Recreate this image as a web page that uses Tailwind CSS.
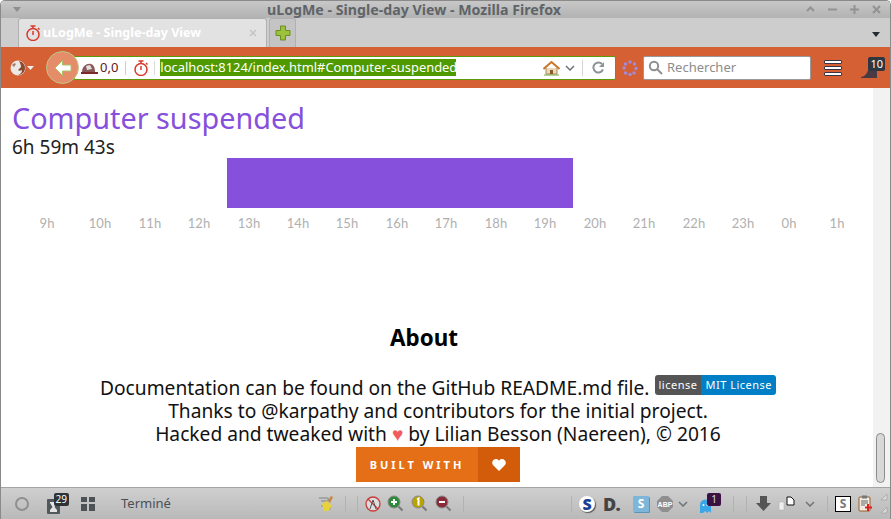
<!DOCTYPE html>
<html lang="fr">
<head>
    <meta charset="UTF-8" />
    <title>uLogMe - Single-day View - Mozilla Firefox</title>
    <script src="https://cdn.jsdelivr.net/npm/@tailwindcss/browser@4"></script>
</head>
<body class="m-0 overflow-hidden bg-white font-['Noto_Sans','Open_Sans',sans-serif]">
<div class="flex h-[519px] w-[891px] flex-col overflow-hidden rounded-t-[5px] border-x border-t border-x-[#8a8a8a] border-t-[#8a8a8a]">

    <!-- title bar -->
    <div class="flex h-[17px] shrink-0 items-center justify-between bg-gradient-to-b from-[#c8c8c8] to-[#b2b2b2] pl-[11px] pr-[9px]">
        <svg width="10" height="6" viewBox="0 0 10 6"><path d="M1 0h8L5 5z" fill="#8e8e8e"/></svg>
        <div class="text-[14.2px] font-bold leading-[17px] text-[#5f6468]">uLogMe - Single-day View - Mozilla Firefox</div>
        <div class="flex items-center gap-[13px]">
            <svg width="9" height="9" viewBox="0 0 9 9"><path d="M1 6l3.500-3.500L8 6" fill="none" stroke="#929292" stroke-width="2"/></svg>
            <svg width="9" height="9" viewBox="0 0 9 9"><path d="M0 4.500h9" stroke="#929292" stroke-width="2"/></svg>
            <svg width="9" height="9" viewBox="0 0 9 9"><path d="M0 4.500h9M4.500 0v9" stroke="#929292" stroke-width="2"/></svg>
            <svg width="9" height="9" viewBox="0 0 9 9"><path d="M1 1l7 7M8 1l-7 7" stroke="#929292" stroke-width="2"/></svg>
        </div>
    </div>

    <!-- tab strip -->
    <div class="flex h-[29px] shrink-0 items-end bg-[#cdcdcd] pl-[17px] pr-[10px]">
        <div class="flex h-[29px] w-[249px] items-center rounded-t-[3px] border border-b-0 border-[#b0b0b0] bg-[#e2e2e2] pl-[6px] pr-[9px]">
            <svg width="16" height="16" viewBox="0 0 16 16" class="shrink-0"><circle cx="8" cy="9.500" r="6" fill="none" stroke="#d8392b" stroke-width="1.500"/><path d="M5.500 1h5M8 1v2M8 6v4M13 3l1.500 1.500" stroke="#d8392b" stroke-width="1.500" fill="none"/></svg>
            <span class="ml-[2px] text-[12.500px] font-bold leading-none text-white">uLogMe - Single-day View</span>
            <svg width="8" height="8" viewBox="0 0 8 8" class="ml-auto"><path d="M1 1l6 6M7 1L1 7" stroke="#c4c4c4" stroke-width="1.500"/></svg>
        </div>
        <div class="ml-[2px] flex h-[29px] w-[27px] items-center justify-center rounded-t-[3px] border border-b-0 border-[#b0b0b0] bg-[#c4c4c4]">
            <svg width="16" height="16" viewBox="0 0 16 16"><path d="M5.500 1h5v4.500H15v5h-4.500V15h-5v-4.500H1v-5h4.500z" fill="#9cc23c" stroke="#6d8f22"/></svg>
        </div>
        <svg width="8" height="5" viewBox="0 0 8 5" class="mb-[10px] ml-auto"><path d="M0 0h8L4 5z" fill="#222b36"/></svg>
    </div>

    <!-- nav bar -->
    <div class="flex h-[41px] shrink-0 items-center bg-[#d46034] pl-[9px]">
        <svg width="24" height="18" viewBox="0 0 24 18" class="shrink-0"><circle cx="8" cy="9" r="7.500" fill="#ece8e4"/><path d="M9 2c4 1 6 4 6 7 0 4-3 7-7 7 3-1 4-3 4-5-1 1-3 1-4 0l3-3C11 6 10 4 9 2z" fill="#8a4a34"/><path d="M2 6c2-2 3-2 4-1L4 8z" fill="#a87a68"/><path d="M17 7h7l-3.500 4z" fill="#eee"/></svg>
        <!-- back button overlaps the url bar -->
        <div class="relative z-10 ml-[12px] flex h-[33px] w-[33px] shrink-0 items-center justify-center rounded-full border border-[#b9c98e] bg-[#e58c68]">
            <svg width="18" height="16" viewBox="0 0 18 16"><path d="M8.500 0.500L1 8l7.500 7.500v-4.500H17V5H8.500z" fill="#fff" stroke="#a8c46a"/></svg>
        </div>
        <div class="-ml-[5px] flex h-[24px] w-[542px] shrink-0 items-center rounded-r-[2px] border border-[#5b9a08] bg-white">
            <svg width="20" height="16" viewBox="0 0 20 16" class="ml-[5px] shrink-0"><path d="M2 12C2 6 7 3 11 4c3 1 4 4 4 8z" fill="#8a5a5a"/><path d="M1 13h17" stroke="#7c2a2a" stroke-width="2"/><path d="M6 6l4-1 2 4-5 1z" fill="#e6e0e0"/></svg>
            <span class="text-[13px] leading-none text-[#5c1a1a]">0,0</span>
            <div class="ml-[7px] mr-[7px] h-[14px] w-px bg-[#d8c8c0]"></div>
            <svg width="16" height="16" viewBox="0 0 16 16" class="shrink-0"><circle cx="8" cy="9.500" r="6" fill="none" stroke="#d8392b" stroke-width="1.500"/><path d="M5.500 1h5M8 1v2M8 6v4M13 3l1.500 1.500" stroke="#d8392b" stroke-width="1.500" fill="none"/></svg>
            <div class="mx-[5px] h-[14px] w-px bg-[#dcdcdc]"></div>
            <span class="flex h-[17px] w-[296px] items-center whitespace-nowrap bg-[#4f9a00] text-[12.900px] leading-none text-white">localhost:8124/index.html#Computer-suspended</span>
            <svg width="17" height="16" viewBox="0 0 17 16" class="ml-auto shrink-0"><path d="M3 8v6h11V8" fill="#e9d9b8" stroke="#a98a5a"/><path d="M0.500 9L8.500 2l8 7" fill="none" stroke="#c9772c" stroke-width="2"/><path d="M7 10h3v4H7z" fill="#8a5a2a"/><path d="M1 15h15" stroke="#6fa03a"/></svg>
            <svg width="10" height="6" viewBox="0 0 10 6" class="ml-[5px] shrink-0"><path d="M1 1l4 4 4-4" fill="none" stroke="#6e7478" stroke-width="1.500"/></svg>
            <div class="ml-[7px] h-[16px] w-px bg-[#d4d4d4]"></div>
            <svg width="13" height="13" viewBox="0 0 13 13" class="ml-[9px] mr-[10px] shrink-0"><path d="M11 8.500A5 5 0 1 1 10 3" fill="none" stroke="#8c9296" stroke-width="2"/><path d="M12 1v5H7z" fill="#8c9296"/></svg>
        </div>
        <svg width="16" height="16" viewBox="0 0 16 16" class="ml-[6px] shrink-0"><g fill="#a48ad8"><circle cx="8" cy="2" r="1.700"/><circle cx="12.500" cy="4" r="1.700"/><circle cx="14" cy="8.500" r="1.700"/><circle cx="12" cy="13" r="1.700"/><circle cx="8" cy="14.500" r="1.700"/><circle cx="3.500" cy="13" r="1.700"/><circle cx="2" cy="8" r="1.700"/><circle cx="3.500" cy="4" r="1.700"/></g></svg>
        <div class="ml-[5px] flex h-[24px] w-[168px] shrink-0 items-center rounded-[2px] border border-[#999] bg-white pl-[4px]">
            <svg width="15" height="15" viewBox="0 0 15 15" class="shrink-0"><circle cx="6" cy="6" r="4.200" fill="none" stroke="#8f8f8f" stroke-width="2"/><path d="M9 9l5 5" stroke="#8f8f8f" stroke-width="2"/></svg>
            <span class="ml-[4px] text-[13px] leading-none text-[#8d8d8d]">Rechercher</span>
        </div>
        <div class="ml-[13px] flex h-[16px] w-[18px] shrink-0 flex-col justify-between">
            <div class="h-[4px] rounded-[1px] border border-[#3b3344] bg-white"></div>
            <div class="h-[4px] rounded-[1px] border border-[#3b3344] bg-white"></div>
            <div class="h-[4px] rounded-[1px] border border-[#3b3344] bg-white"></div>
        </div>
        <div class="relative ml-[19px] h-[20px] w-[24px] shrink-0">
            <svg width="16" height="10" viewBox="0 0 16 10" class="absolute bottom-0 left-0"><path d="M0 9c3 0 6-3 7-7h9v8H0z" fill="#4a3a44"/></svg>
            <span class="absolute -top-[1px] right-0 h-[14px] rounded-[2px] bg-[#2f3640] px-[2px] text-[11px] leading-[14px] text-white">10</span>
        </div>
    </div>

    <!-- page -->
    <div class="relative flex min-h-0 flex-1 bg-white">
        <div class="min-w-0 flex-1 pl-[11px]">
            <div class="mt-[12px] text-[28.800px] leading-[36px] text-[#8650dc]">Computer suspended</div>
            <div class="mt-[1px] text-[19px] leading-[21px] text-[#222]">6h 59m 43s</div>

            <!-- timeline -->
            <svg width="845" height="74" viewBox="0 0 845 74" class="-ml-[11px] block" font-family="Lato, sans-serif" font-size="13" fill="#b0b0b0" text-anchor="middle">
                <rect x="226" y="0" width="346" height="50" fill="#8650dc"/>
                <text x="46" y="70">9h</text>
                <text x="99" y="70">10h</text>
                <text x="149" y="70">11h</text>
                <text x="198" y="70">12h</text>
                <text x="248" y="70">13h</text>
                <text x="297" y="70">14h</text>
                <text x="346" y="70">15h</text>
                <text x="396" y="70">16h</text>
                <text x="445" y="70">17h</text>
                <text x="495" y="70">18h</text>
                <text x="544" y="70">19h</text>
                <text x="594" y="70">20h</text>
                <text x="643" y="70">21h</text>
                <text x="693" y="70">22h</text>
                <text x="742" y="70">23h</text>
                <text x="788" y="70">0h</text>
                <text x="836" y="70">1h</text>
            </svg>

            <div class="ml-[-11px] mt-[92px] flex flex-col items-center pl-[2px] text-[19.200px] leading-[23px] text-[#111]">
                <div class="pr-[28px] text-[22.400px] font-bold leading-[28px] text-black">About</div>
                <div class="mt-[24px] flex items-start">
                    <span>Documentation can be found on the GitHub README.md file.</span>
                    <span class="-mt-[1px] ml-[5px] flex h-[20px] overflow-hidden rounded-[3px] text-[11px] leading-[20px] tracking-[0.500px] text-white">
                        <span class="bg-[#555] px-[4px]">license</span>
                        <span class="bg-[#007ec6] px-[4px]">MIT License</span>
                    </span>
                </div>
                <div>Thanks to @karpathy and contributors for the initial project.</div>
                <div>Hacked and tweaked with <span class="text-[#f25c5c]">♥</span> by Lilian Besson (Naereen), © 2016</div>
                <div class="mt-[2px] flex h-[35px] items-stretch text-white">
                    <span class="flex w-[122px] items-center justify-center bg-[#e46f17] text-[11px] font-bold tracking-[3px]">BUILT WITH</span>
                    <span class="flex w-[42px] items-center justify-center bg-[#d25c0a]">
                        <svg width="14" height="12" viewBox="0 0 14 12"><path d="M7 12L1 6C-1 3.500 1 0 4 0c1.300 0 2.300.6 3 1.700C7.700.6 8.700 0 10 0c3 0 5 3.500 3 6z" fill="#fff"/></svg>
                    </span>
                </div>
            </div>
        </div>
        <!-- scrollbar -->
        <div class="relative w-[17px] shrink-0 bg-[#f2f2f2]">
            <div class="absolute bottom-[4px] left-[3px] h-[50px] w-[9px] rounded-[5px] border border-[#8c8c8c] bg-[#d8d8d8]"></div>
        </div>
    </div>

    <!-- status bar -->
    <div class="flex h-[32px] shrink-0 items-center border-t border-[#a4a4a4] bg-gradient-to-b from-[#cfcfcf] to-[#b9b9b9] pl-[14px] text-[#555]">
        <div class="h-[14px] w-[14px] shrink-0 rounded-full border-2 border-[#8f8f8f]"></div>
        <div class="relative ml-[18px] h-[20px] w-[22px] shrink-0">
            <svg width="13" height="15" viewBox="0 0 13 15" class="absolute bottom-0 left-0"><rect width="13" height="15" rx="1" fill="#50585c"/><path d="M3 3h7v1L7.500 8 10 11v2H3v-2l2.500-3L3 4z" fill="#e4e4e4"/></svg>
            <span class="absolute -top-[1px] right-0 h-[13px] rounded-[2px] bg-[#2f3338] px-[2px] text-[10px] leading-[13px] text-white">29</span>
        </div>
        <svg width="14" height="14" viewBox="0 0 14 14" class="ml-[12px] shrink-0"><path d="M0 0h6v5H0zM8 0h6v5H8zM0 7h6v7H0zM8 7h6v7H8z" fill="#4d5256"/></svg>
        <span class="ml-[26px] w-[197px] shrink-0 text-[13px] text-[#4a5056]">Terminé</span>
        <svg width="16" height="18" viewBox="0 0 16 18" class="shrink-0"><path d="M1 3h8a1.500 1.500 0 0 1 0 3H3" fill="none" stroke="#999" stroke-width="1.500"/><path d="M3 11h8a1.500 1.500 0 0 1 0 3" fill="none" stroke="#999" stroke-width="1.500"/><path d="M4 9l5-3 5 5-4 5H6z" fill="#e8d23a"/><path d="M10 6l3-5 2 1-3 6z" fill="#c8843a"/></svg>
        <div class="ml-[11px] h-[16px] w-px shrink-0 bg-[#b2b2b2]"></div>
        <div class="ml-[11px] h-[16px] w-px shrink-0 bg-[#b2b2b2]"></div>
        <svg width="16" height="16" viewBox="0 0 16 16" class="ml-[7px] shrink-0"><circle cx="8" cy="8" r="7" fill="#ddd" stroke="#c83c3c" stroke-width="1.300"/><path d="M3 3l10 10" stroke="#c83c3c" stroke-width="1.300"/><path d="M8 4l-3 9M8 4l3 9" stroke="#555"/></svg>
        <svg width="17" height="17" viewBox="0 0 17 17" class="ml-[6px] shrink-0"><circle cx="7" cy="7" r="6" fill="#2d8a3a" stroke="#888"/><path d="M7 4v6M4 7h6" stroke="#fff" stroke-width="2"/><path d="M11.500 11.500l4 4" stroke="#777" stroke-width="2"/></svg>
        <svg width="17" height="17" viewBox="0 0 17 17" class="ml-[7px] shrink-0"><circle cx="7" cy="7" r="6" fill="#b8a300" stroke="#888"/><path d="M6 4.500L7.500 3.500V10.500" fill="none" stroke="#fff" stroke-width="2"/><path d="M11.500 11.500l4 4" stroke="#777" stroke-width="2"/></svg>
        <svg width="17" height="17" viewBox="0 0 17 17" class="ml-[7px] shrink-0"><circle cx="7" cy="7" r="6" fill="#8a2b3a" stroke="#888"/><path d="M4 7h6" stroke="#fff" stroke-width="2"/><path d="M11.500 11.500l4 4" stroke="#777" stroke-width="2"/></svg>
        <div class="ml-[11px] h-[16px] w-px shrink-0 bg-[#b2b2b2]"></div>
        <div class="ml-[107px] h-[16px] w-px shrink-0 bg-[#b2b2b2]"></div>
        <span class="ml-[7px] flex h-[16px] w-[16px] shrink-0 items-center justify-center rounded-full bg-white text-[16px] font-black leading-none text-[#1c3f94] shadow-[1px_1px_1px_#555]">S</span>
        <span class="ml-[8px] w-[19px] shrink-0 text-[18px] font-black leading-none text-[#444]">D.</span>
        <span class="ml-[11px] flex h-[16px] w-[16px] shrink-0 items-center justify-center rounded-[1px] bg-[#7db6d8] text-[12px] font-bold leading-none text-white shadow-[1px_1px_0_#5c93b4]">S</span>
        <svg width="16" height="16" viewBox="0 0 16 16" class="ml-[8px] shrink-0" font-family="Liberation Sans, sans-serif"><path d="M5 0h6l5 5v6l-5 5H5l-5-5V5z" fill="#8f8f8f"/><text x="8" y="10.500" font-size="7" font-weight="700" fill="#fff" text-anchor="middle">ABP</text></svg>
        <svg width="10" height="6" viewBox="0 0 10 6" class="ml-[5px] shrink-0"><path d="M1 1l4 4 4-4" fill="none" stroke="#6e7478" stroke-width="1.500"/></svg>
        <div class="relative ml-[11px] h-[20px] w-[22px] shrink-0">
            <svg width="13" height="15" viewBox="0 0 13 15" class="absolute bottom-0 left-0"><path d="M1 14V6a5.500 5.500 0 0 1 11 0v8l-2-2-2 2-2-2-2 2z" fill="#39a6e8"/><circle cx="4.500" cy="6" r="1" fill="#fff"/><circle cx="8.500" cy="6" r="1" fill="#fff"/></svg>
            <span class="absolute -top-[1px] right-0 h-[13px] rounded-[2px] bg-[#3a1140] px-[4px] text-[10px] leading-[13px] text-[#ddd]">1</span>
        </div>
        <div class="ml-[12px] h-[16px] w-px shrink-0 bg-[#b2b2b2]"></div>
        <div class="ml-[12px] h-[16px] w-px shrink-0 bg-[#b2b2b2]"></div>
        <svg width="15" height="15" viewBox="0 0 15 15" class="ml-[9px] shrink-0"><path d="M4 0h7v7h4l-7.500 8L0 7h4z" fill="#555"/></svg>
        <svg width="18" height="15" viewBox="0 0 18 15" class="ml-[7px] shrink-0"><path d="M1 6h5v8H1z" fill="#eee" stroke="#aaa" stroke-width=".5"/><path d="M9 1h4l3 3v5H9z" fill="#fff" stroke="#111"/></svg>
        <svg width="10" height="6" viewBox="0 0 10 6" class="ml-[9px] shrink-0"><path d="M1 1l4 4 4-4" fill="none" stroke="#6e7478" stroke-width="1.500"/></svg>
        <div class="ml-[12px] h-[16px] w-px shrink-0 bg-[#b2b2b2]"></div>
        <span class="ml-[7px] flex h-[16px] w-[16px] shrink-0 items-center justify-center border border-black bg-white text-[12px] font-bold leading-none text-[#777]">S</span>
        <svg width="14" height="17" viewBox="0 0 14 17" class="ml-[7px] shrink-0"><rect x="1" y="2" width="11" height="14" rx="1" fill="#f0ece4" stroke="#9a5a20"/><rect x="4" y="0.500" width="5" height="3" fill="#777"/><path d="M3 6h7M3 8h7M3 10h4" stroke="#666"/><path d="M10 9v7M7 12.500h7" stroke="#e02020" stroke-width="2"/></svg>
        <svg width="10" height="22" viewBox="0 0 10 22" class="ml-[6px] shrink-0"><path d="M9 1v6H3zM9 14v6H3z" fill="#d8d8d8" stroke="#a0a0a0" stroke-width=".7"/></svg>
    </div>
</div>
</body>
</html>
